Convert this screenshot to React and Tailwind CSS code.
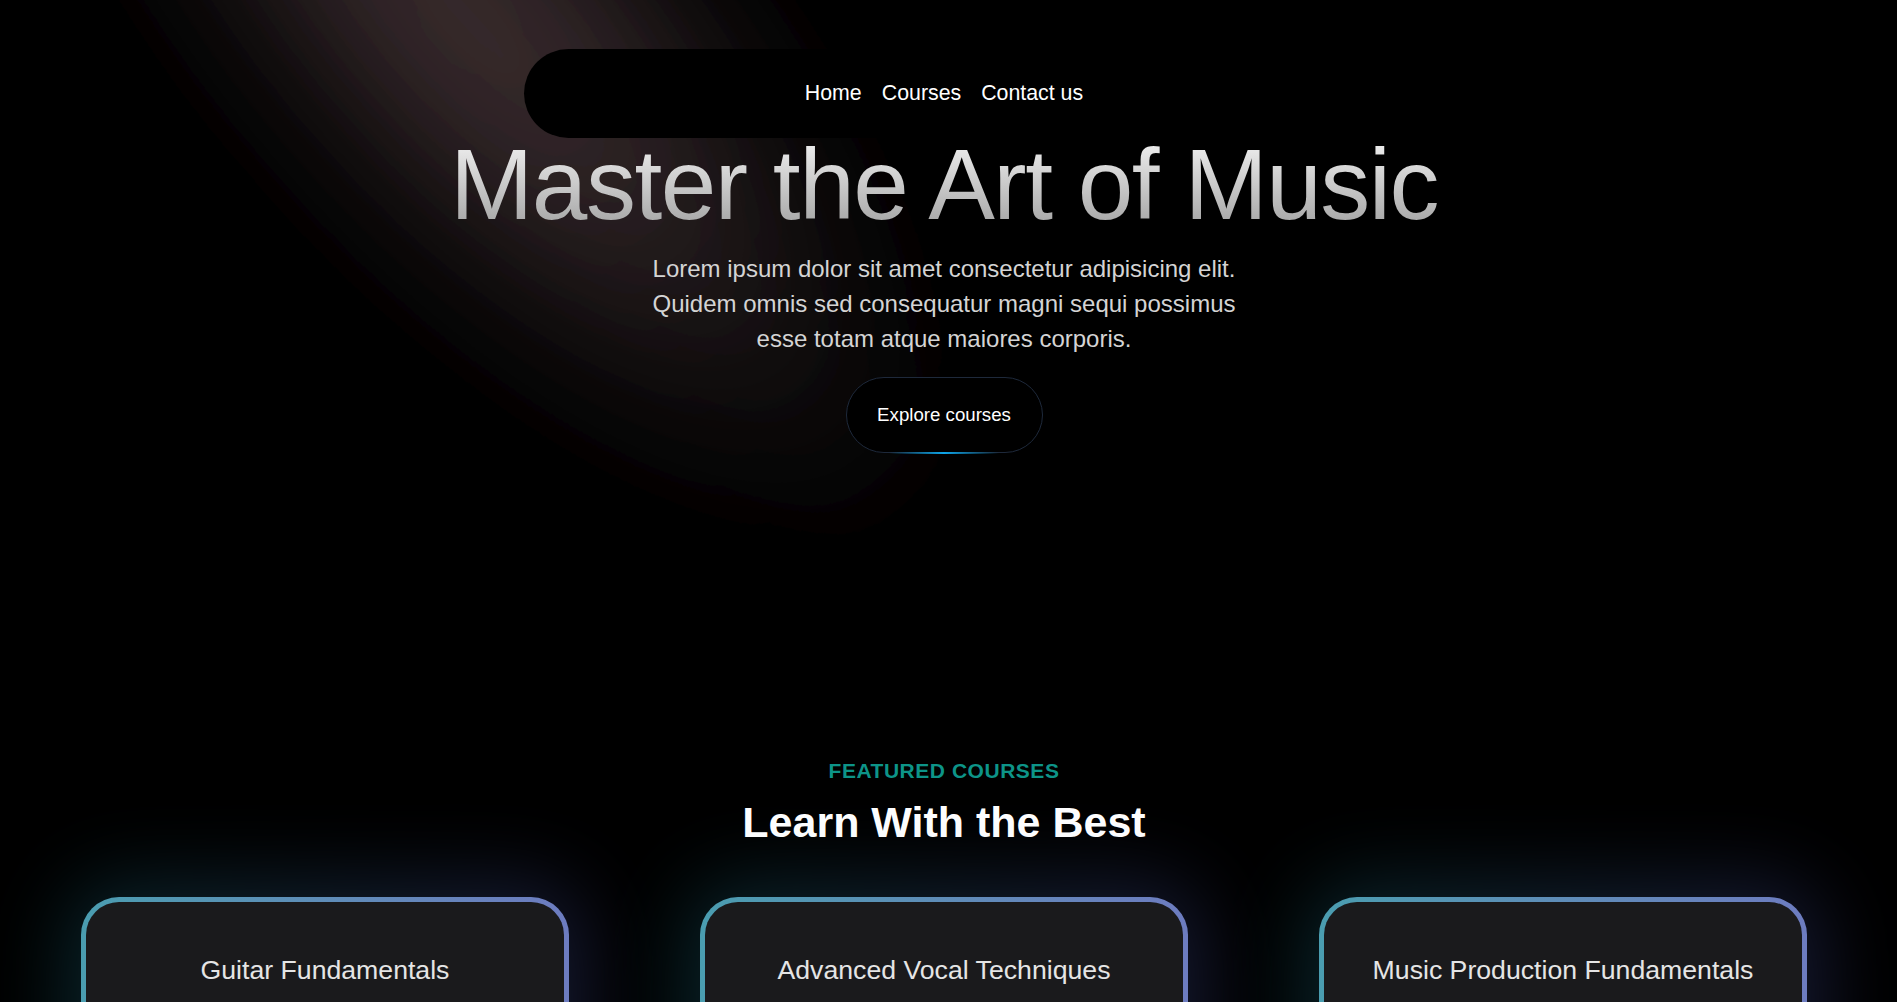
import React from "react";

const courses = [
  "Guitar Fundamentals",
  "Advanced Vocal Techniques",
  "Music Production Fundamentals",
];

function Spotlight() {
  return (
    <svg
      className="pointer-events-none absolute left-0 top-0"
      width="1300"
      height="820"
      viewBox="0 0 1300 820"
      fill="none"
    >
      <defs>
        <radialGradient id="spotGrad" cx="0.5" cy="0.5" r="0.5">
          <stop offset="0" stopColor="#3b2d30" stopOpacity="1" />
          <stop offset="0.2" stopColor="#3b2d30" stopOpacity="0.92" />
          <stop offset="0.4" stopColor="#3b2d30" stopOpacity="0.68" />
          <stop offset="0.6" stopColor="#3b2d30" stopOpacity="0.38" />
          <stop offset="0.8" stopColor="#3b2d30" stopOpacity="0.13" />
          <stop offset="1" stopColor="#3b2d30" stopOpacity="0" />
        </radialGradient>
        <filter id="spotBlur" x="-50%" y="-50%" width="200%" height="200%">
          <feGaussianBlur stdDeviation="60" />
        </filter>
      </defs>
      <ellipse
        cx="470"
        cy="20"
        rx="700"
        ry="250"
        transform="rotate(48 470 20)"
        fill="url(#spotGrad)"
        filter="url(#spotBlur)"
      />
    </svg>
  );
}

function CourseCard({ title }) {
  return (
    <div className="relative">
      <div className="absolute -inset-4 rounded-[56px] bg-gradient-to-r from-[#1f8fa3] to-[#5a64c8] opacity-25 blur-2xl" />
      <div className="relative rounded-[38px] bg-gradient-to-r from-[#4a9db0] to-[#6d7cc0] p-[5px]">
        <div className="h-[420px] rounded-[33px] bg-[#1a1a1c] pt-[50px] text-center">
          <h3 className="text-[26.67px] leading-[37px] text-[#e5e5e5]">{title}</h3>
        </div>
      </div>
    </div>
  );
}

export default function App() {
  return (
    <div
      className="relative min-h-screen overflow-hidden bg-black"
      style={{ fontFamily: '"Liberation Sans", Arial, Helvetica, sans-serif' }}
    >
      <Spotlight />
      <div className="relative w-[1888px]">
        <div className="flex flex-col items-center pt-[49px]">
          <nav className="flex h-[89px] w-[840px] items-center justify-center gap-[20px] rounded-full bg-black">
            <a className="text-[21.33px] text-white">Home</a>
            <a className="text-[21.33px] text-white">Courses</a>
            <a className="text-[21.33px] text-white">Contact us</a>
          </nav>
          <h1 className="bg-gradient-to-b from-[#f2f2f2] to-[#a3a3a3] bg-clip-text text-[100px] leading-[92px] tracking-[-1.5px] text-transparent">
            Master the Art of Music
          </h1>
          <p className="mt-[21px] max-w-[620px] text-center text-[24px] leading-[35px] text-[#d4d4d4]">
            Lorem ipsum dolor sit amet consectetur adipisicing elit. Quidem omnis sed consequatur magni sequi possimus esse totam atque maiores corporis.
          </p>
          <button className="relative mt-[21px] flex h-[76px] w-[197px] items-center justify-center rounded-full border border-[#1e293b] bg-black text-[18.67px] text-white">
            Explore courses
            <span className="absolute -bottom-[2px] left-1/2 h-[2px] w-[110px] -translate-x-1/2 bg-gradient-to-r from-transparent via-[#0ea5e9] to-transparent" />
          </button>
        </div>

        <section className="mt-[304px] flex flex-col items-center">
          <p className="text-[21px] font-semibold uppercase leading-[28px] tracking-wide text-[#0d9488]">
            Featured courses
          </p>
          <h2 className="mt-[11px] text-[43px] font-bold leading-[52px] text-white">
            Learn With the Best
          </h2>
          <div className="mt-[49px] grid grid-cols-[488px_488px_488px] gap-[131px]">
            {courses.map((c) => (
              <CourseCard key={c} title={c} />
            ))}
          </div>
        </section>
      </div>
    </div>
  );
}
